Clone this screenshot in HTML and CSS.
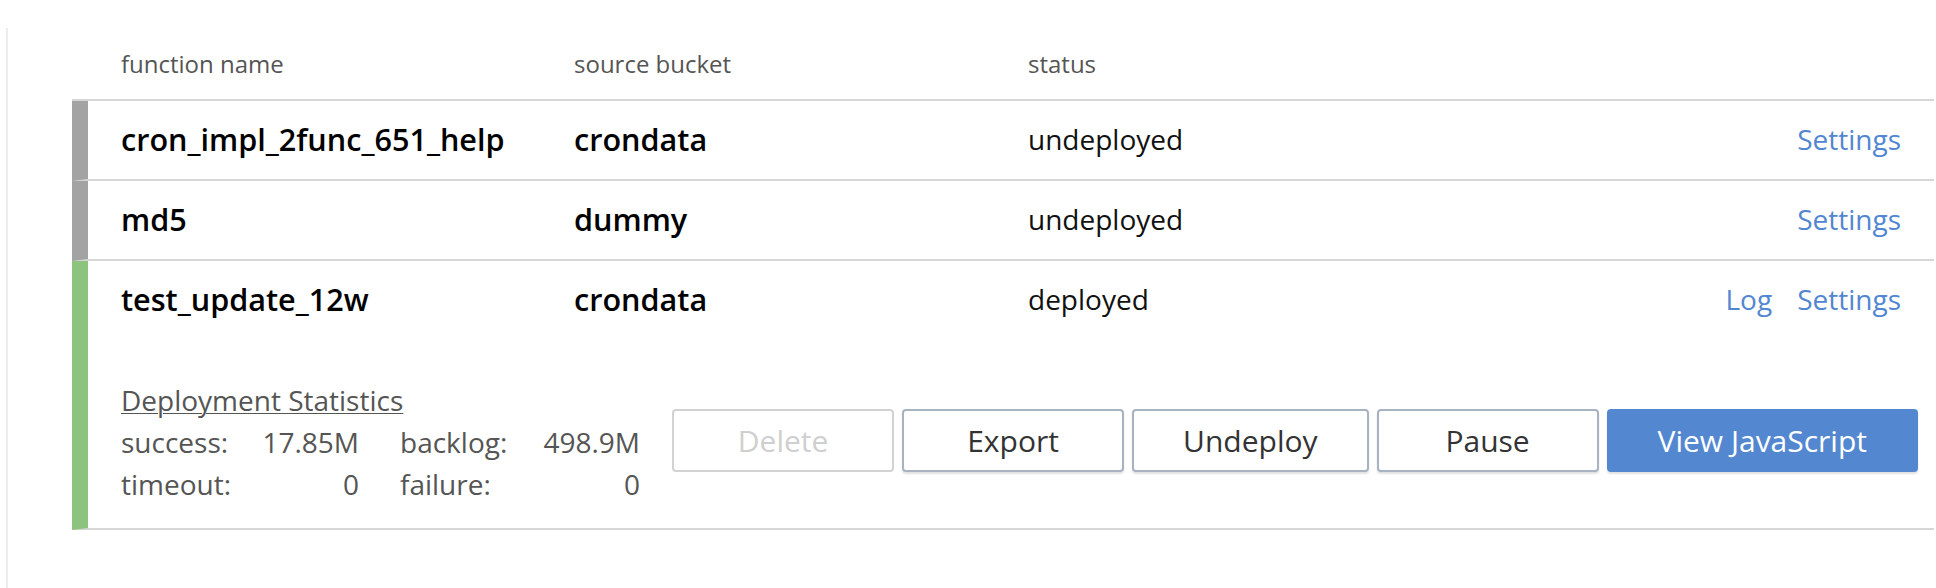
FILE: index.html
```html
<!DOCTYPE html>
<html>
<head>
<meta charset="utf-8">
<link rel="stylesheet" href="styles.css">
</head>
<body>
<div class="page">
  <div class="table">
    <div class="head">
      <span>function name</span>
      <span>source bucket</span>
      <span>status</span>
      <span></span>
    </div>

    <div class="row row-off">
      <div class="line">
        <span class="name">cron_impl_2func_651_help</span>
        <span class="name">crondata</span>
        <span class="status">undeployed</span>
        <span class="links"><a class="link">Settings</a></span>
      </div>
    </div>

    <div class="row row-off">
      <div class="line">
        <span class="name">md5</span>
        <span class="name">dummy</span>
        <span class="status">undeployed</span>
        <span class="links"><a class="link">Settings</a></span>
      </div>
    </div>

    <div class="row row-on">
      <div class="line">
        <span class="name">test_update_12w</span>
        <span class="name">crondata</span>
        <span class="status">deployed</span>
        <span class="links"><a class="link">Log</a><a class="link">Settings</a></span>
      </div>
      <div class="detail">
        <div class="stats">
          <div class="stats-title">Deployment Statistics</div>
          <div class="stats-grid">
            <div class="pair"><span>success:</span><span>17.85M</span></div>
            <div class="pair"><span>backlog:</span><span>498.9M</span></div>
            <div class="pair"><span>timeout:</span><span>0</span></div>
            <div class="pair"><span>failure:</span><span>0</span></div>
          </div>
        </div>
        <div class="buttons">
          <button class="btn btn-disabled">Delete</button>
          <button class="btn">Export</button>
          <button class="btn">Undeploy</button>
          <button class="btn">Pause</button>
          <button class="btn btn-primary">View JavaScript</button>
        </div>
      </div>
    </div>
  </div>
</div>
</body>
</html>
```

FILE: styles.css
```css
* { box-sizing: border-box; }

html, body {
  margin: 0;
  padding: 0;
  background: #ffffff;
  font-family: "Open Sans", "Noto Sans", sans-serif;
}

.page {
  margin: 28px 2px 0 6px;
  min-height: 560px;
  border-left: 2px solid #ececec;
  padding-left: 64px;
}

.table {
  width: 100%;
}

.head {
  display: grid;
  grid-template-columns: 453px 454px 1fr auto;
  padding: 19px 33px 19px 49px;
  font-size: 24px;
  line-height: 33px;
  color: #555555;
  border-bottom: 2px solid #d6d6d6;
}

.row {
  border-left: 16px solid #a3a3a3;
  border-bottom: 2px solid #d6d6d6;
}

.row-on {
  border-left-color: #8cc47e;
}

.line {
  display: grid;
  grid-template-columns: 453px 454px 1fr auto;
  align-items: center;
  height: 78px;
  padding: 0 33px 2px;
}

.name {
  font-size: 30.6px;
  font-weight: 600;
  color: #000000;
}

.status {
  font-size: 28px;
  color: #111111;
}

.links {
  display: flex;
  gap: 25px;
  font-size: 28px;
}

.link {
  color: #5386d0;
  text-decoration: none;
}

.detail {
  display: flex;
  align-items: flex-start;
  padding: 40px 16px 23px 33px;
}

.stats {
  font-size: 28px;
  line-height: 42px;
  color: #555555;
}

.stats-title {
  text-decoration: underline;
  text-underline-offset: 2px;
  text-decoration-thickness: 1px;
}

.stats-grid {
  display: grid;
  grid-template-columns: 238px 240px;
  column-gap: 41px;
}

.pair {
  display: flex;
  justify-content: space-between;
}

.buttons {
  margin-left: auto;
  margin-top: 30px;
  display: flex;
  gap: 8px;
}

.btn {
  font-family: "Open Sans", "Noto Sans", sans-serif;
  font-size: 30px;
  height: 63px;
  min-width: 222px;
  padding: 0 49px;
  background: #ffffff;
  color: #333333;
  border: 2px solid #a8b2c0;
  border-radius: 4px;
  box-shadow: 0 2px 2px rgba(0, 0, 0, 0.12);
}

.btn-disabled {
  color: #cfcfcf;
  border-color: #d2d2d2;
  box-shadow: none;
}

.btn-primary {
  background: #5387d0;
  border-color: #5387d0;
  color: #ffffff;
}
```
